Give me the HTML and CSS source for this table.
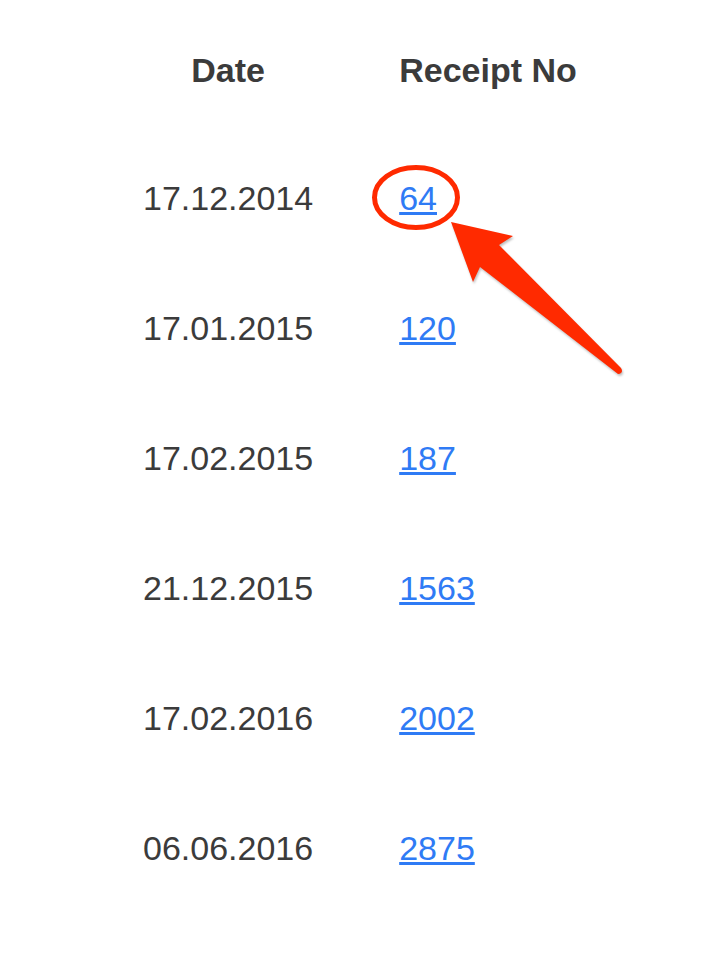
FILE: index.html
```html
<!DOCTYPE html>
<html lang="en">
<head>
  <meta charset="UTF-8">
  <meta name="viewport" content="width=device-width, initial-scale=1.0">
  <title>Receipts</title>
  <link rel="stylesheet" href="styles.css">
</head>
<body>
  <table class="receipts">
    <thead>
      <tr>
        <th>Date</th>
        <th>Receipt No</th>
      </tr>
    </thead>
    <tbody>
      <tr><td>17.12.2014</td><td><a href="#">64</a></td></tr>
      <tr><td>17.01.2015</td><td><a href="#">120</a></td></tr>
      <tr><td>17.02.2015</td><td><a href="#">187</a></td></tr>
      <tr><td>21.12.2015</td><td><a href="#">1563</a></td></tr>
      <tr><td>17.02.2016</td><td><a href="#">2002</a></td></tr>
      <tr><td>06.06.2016</td><td><a href="#">2875</a></td></tr>
    </tbody>
  </table>

  <!-- annotation drawn over the table -->
  <svg class="markup" width="704" height="968" viewBox="0 0 704 968">
    <ellipse cx="416" cy="197.5" rx="41.5" ry="30" fill="none" stroke="#ff2a00" stroke-width="5"/>
    <path class="arrow" d="M451 222 L513 236 L499 245 L621 368 Q624 373 618 374 L480 267 L473 282 Z" fill="#ff2a00"/>
  </svg>
</body>
</html>
```

FILE: styles.css
```css
body {
  margin: 0;
  background: #fff;
  font-family: "Liberation Sans", Arial, sans-serif;
  color: #3b3b3b;
}
.receipts {
  border-collapse: collapse;
  margin: 7px 0 0 100px;
  font-size: 34px;
  line-height: 40px;
}
.receipts th {
  padding: 43px 43px;
  font-weight: bold;
  text-align: center;
}
.receipts td {
  padding: 45px 43px;
  text-align: left;
}
.receipts a {
  color: #2f7bf5;
  text-decoration: underline;
}
.markup {
  position: absolute;
  top: 0;
  left: 0;
  pointer-events: none;
}
.arrow {
  filter: drop-shadow(1px 2px 1px rgba(0,0,0,0.25));
}
```
